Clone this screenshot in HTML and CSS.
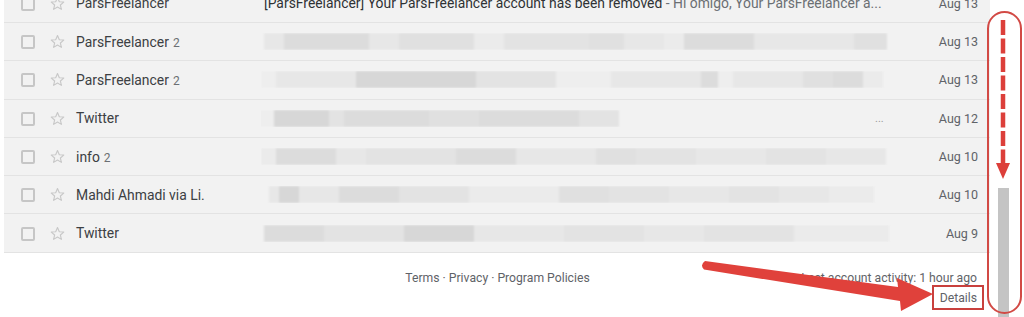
FILE: index.html
```html
<!DOCTYPE html>
<html>
<head>
<meta charset="utf-8">
<link rel="stylesheet" href="styles.css">
</head>
<body>
<div class="page">
  <main class="main">
    <div class="list">
      <div class="row">
        <span class="cb"></span>
        <svg class="star" viewBox="0 0 24 24"><path d="M12 2.5l2.9 6.6 7.1.6-5.4 4.7 1.6 7-6.2-3.7-6.2 3.7 1.6-7L2 9.7l7.1-.6z"/></svg>
        <span class="sender">ParsFreelancer</span>
        <span class="snippet text"><span class="subj">[ParsFreelancer] Your ParsFreelancer account has been removed</span> - Hi omigo, Your ParsFreelancer a...</span>
        <span class="date">Aug 13</span>
      </div>
      <div class="row">
        <span class="cb"></span>
        <svg class="star" viewBox="0 0 24 24"><path d="M12 2.5l2.9 6.6 7.1.6-5.4 4.7 1.6 7-6.2-3.7-6.2 3.7 1.6-7L2 9.7l7.1-.6z"/></svg>
        <span class="sender">ParsFreelancer<span class="count">2</span></span>
        <span class="snippet"><span class="blur" style="margin-left:3px">
          <i class="g2" style="width:20px"></i><i class="g5" style="width:85px"></i><i class="g2" style="width:30px"></i><i class="g4" style="width:75px"></i><i class="g1" style="width:30px"></i><i class="g3" style="width:40px"></i><i class="g3" style="width:45px"></i><i class="g4" style="width:35px"></i><i class="g2" style="width:40px"></i><i class="g1" style="width:20px"></i><i class="g5" style="width:70px"></i><i class="g2" style="width:100px"></i><i class="g4" style="width:33px"></i>
        </span></span>
        <span class="date">Aug 13</span>
      </div>
      <div class="row">
        <span class="cb"></span>
        <svg class="star" viewBox="0 0 24 24"><path d="M12 2.5l2.9 6.6 7.1.6-5.4 4.7 1.6 7-6.2-3.7-6.2 3.7 1.6-7L2 9.7l7.1-.6z"/></svg>
        <span class="sender">ParsFreelancer<span class="count">2</span></span>
        <span class="snippet"><span class="blur">
          <i class="g0" style="width:15px"></i><i class="g2" style="width:80px"></i><i class="g6" style="width:120px"></i><i class="g3" style="width:80px"></i><i class="g0" style="width:55px"></i><i class="g2" style="width:55px"></i><i class="g2" style="width:35px"></i><i class="g5" style="width:17px"></i><i class="g0" style="width:15px"></i><i class="g2" style="width:70px"></i><i class="g4" style="width:30px"></i><i class="g5" style="width:30px"></i><i class="g1" style="width:20px"></i>
        </span></span>
        <span class="date">Aug 13</span>
      </div>
      <div class="row">
        <span class="cb"></span>
        <svg class="star" viewBox="0 0 24 24"><path d="M12 2.5l2.9 6.6 7.1.6-5.4 4.7 1.6 7-6.2-3.7-6.2 3.7 1.6-7L2 9.7l7.1-.6z"/></svg>
        <span class="sender">Twitter</span>
        <span class="snippet"><span class="blur" style="margin-left:-4px">
          <i class="g0" style="width:17px"></i><i class="g6" style="width:55px"></i><i class="g3" style="width:15px"></i><i class="g5" style="width:85px"></i><i class="g4" style="width:50px"></i><i class="g5" style="width:100px"></i><i class="g3" style="width:40px"></i>
        </span><span class="dots">...</span></span>
        <span class="date">Aug 12</span>
      </div>
      <div class="row">
        <span class="cb"></span>
        <svg class="star" viewBox="0 0 24 24"><path d="M12 2.5l2.9 6.6 7.1.6-5.4 4.7 1.6 7-6.2-3.7-6.2 3.7 1.6-7L2 9.7l7.1-.6z"/></svg>
        <span class="sender">info<span class="count">2</span></span>
        <span class="snippet"><span class="blur">
          <i class="g1" style="width:15px"></i><i class="g5" style="width:60px"></i><i class="g2" style="width:30px"></i><i class="g3" style="width:90px"></i><i class="g5" style="width:60px"></i><i class="g2" style="width:80px"></i><i class="g4" style="width:40px"></i><i class="g3" style="width:60px"></i><i class="g2" style="width:70px"></i><i class="g3" style="width:60px"></i><i class="g2" style="width:60px"></i>
        </span></span>
        <span class="date">Aug 10</span>
      </div>
      <div class="row">
        <span class="cb"></span>
        <svg class="star" viewBox="0 0 24 24"><path d="M12 2.5l2.9 6.6 7.1.6-5.4 4.7 1.6 7-6.2-3.7-6.2 3.7 1.6-7L2 9.7l7.1-.6z"/></svg>
        <span class="sender">Mahdi Ahmadi via Li.</span>
        <span class="snippet"><span class="blur" style="margin-left:8px">
          <i class="g2" style="width:10px"></i><i class="g6" style="width:20px"></i><i class="g2" style="width:40px"></i><i class="g5" style="width:60px"></i><i class="g3" style="width:70px"></i><i class="g1" style="width:90px"></i><i class="g4" style="width:50px"></i><i class="g3" style="width:60px"></i><i class="g2" style="width:60px"></i><i class="g3" style="width:50px"></i><i class="g2" style="width:50px"></i><i class="g1" style="width:45px"></i>
        </span></span>
        <span class="date">Aug 10</span>
      </div>
      <div class="row">
        <span class="cb"></span>
        <svg class="star" viewBox="0 0 24 24"><path d="M12 2.5l2.9 6.6 7.1.6-5.4 4.7 1.6 7-6.2-3.7-6.2 3.7 1.6-7L2 9.7l7.1-.6z"/></svg>
        <span class="sender">Twitter</span>
        <span class="snippet"><span class="blur" style="margin-left:3px">
          <i class="g5" style="width:60px"></i><i class="g3" style="width:80px"></i><i class="g6" style="width:70px"></i><i class="g2" style="width:90px"></i><i class="g3" style="width:80px"></i><i class="g2" style="width:60px"></i><i class="g3" style="width:90px"></i><i class="g1" style="width:95px"></i>
        </span></span>
        <span class="date">Aug 9</span>
      </div>
    </div>
    <footer class="footer">
      <span></span>
      <div class="links">Terms · Privacy · Program Policies</div>
      <div class="activity">
        <div>Last account activity: 1 hour ago</div>
        <div class="details">Details</div>
      </div>
    </footer>
  </main>
  <aside class="scroll">
    <div class="thumb"></div>
  </aside>
  <svg class="annot" viewBox="0 0 1024 317" width="1024" height="317">
    <rect x="988" y="12" width="33" height="301" rx="16.5" fill="none" stroke="#d24a45" stroke-width="2"/>
    <line x1="1003" y1="20" x2="1003" y2="164" stroke="#dc3f3a" stroke-width="4.5" stroke-dasharray="15 3.5"/>
    <polygon points="996,163 1010,163 1003,179" fill="#dc3f3a"/>
    <rect x="933" y="286" width="50" height="23" fill="none" stroke="#c9403d" stroke-width="2"/>
    <path d="M705 261 L898 287 L897 278 L933 294 L901 311 L900 301 L704 269.5 Q699.5 265 705 261 Z" fill="#e0413b"/>
  </svg>
</div>
</body>
</html>
```

FILE: styles.css
```css
* { box-sizing: border-box; }
html, body { margin: 0; padding: 0; background: #fff; }
body { font-family: Roboto, "Liberation Sans", Arial, sans-serif; overflow: hidden; }

.page {
  position: relative;
  display: flex;
  width: 1024px;
  height: 317px;
  overflow: hidden;
}

.main {
  width: 990px;
  flex: none;
}

.list {
  margin-top: -15.3px;
  margin-left: 4px;
}

.row {
  display: flex;
  align-items: center;
  height: 38.3px;
  padding: 0 12px 0 17px;
  background: #f2f2f2;
  border-bottom: 1px solid #e3e3e3;
  font-size: 13.9px;
}

.cb {
  flex: none;
  width: 14px;
  height: 14px;
  border: 2px solid #c6c6c6;
  border-radius: 2px;
  margin-top: 1px;
}

.star {
  flex: none;
  width: 15px;
  height: 15px;
  margin-left: 15px;
  fill: none;
  stroke: #c8c8c8;
  stroke-width: 1.8;
  stroke-linejoin: round;
}

.sender {
  flex: none;
  width: 185px;
  margin-left: 11px;
  color: #3c4043;
  white-space: nowrap;
}

.count {
  font-size: 12px;
  color: #6b6f73;
  margin-left: 4px;
}

.snippet {
  flex: 1;
  display: flex;
  align-items: center;
  min-width: 0;
  white-space: nowrap;
  overflow: hidden;
}

.text {
  display: block;
  padding-left: 3px;
  color: #6b6f73;
}

.subj { color: #2f3235; }

.blur {
  display: flex;
  height: 17px;
  filter: blur(1.2px);
}

.blur i { display: block; height: 100%; }
.g0 { background: #eeeeee; }
.g1 { background: #ebebeb; }
.g2 { background: #e7e7e7; }
.g3 { background: #e3e3e3; }
.g4 { background: #e0e0e0; }
.g5 { background: #dcdcdc; }
.g6 { background: #d7d7d7; }

.dots {
  margin-left: 256px;
  color: #9a9a9a;
  font-size: 11px;
}

.date {
  flex: none;
  width: 56px;
  text-align: right;
  font-size: 12.5px;
  color: #5f6368;
}

.footer {
  display: grid;
  grid-template-columns: 1fr auto 1fr;
  padding: 17px 13px 0 18px;
  font-size: 12.2px;
  color: #5f6368;
  line-height: 16px;
}

.links { text-align: center; }

.activity { text-align: right; }

.details { margin-top: 4px; }

.scroll {
  width: 34px;
  flex: none;
  padding-top: 188px;
  display: flex;
  flex-direction: column;
}

.thumb {
  flex: 1;
  width: 11px;
  margin-left: 8px;
  background: #c4c4c4;
}

.annot {
  position: absolute;
  left: 0;
  top: 0;
  pointer-events: none;
}
```
